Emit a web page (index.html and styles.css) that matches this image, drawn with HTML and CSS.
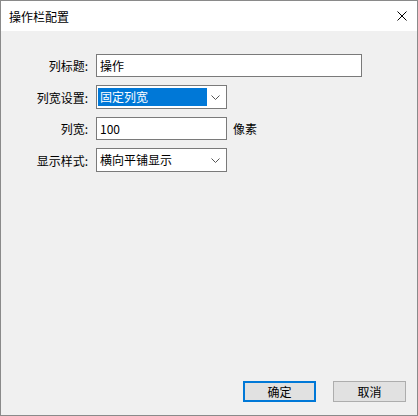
FILE: index.html
```html
<!DOCTYPE html>
<html lang="zh-CN">
<head>
    <meta charset="UTF-8">
    <title>操作栏配置</title>
    <link rel="stylesheet" href="styles.css">
</head>
<body>
    <div class="window">
        <div class="titlebar">
            <span class="title">操作栏配置</span>
            <svg class="close" width="10" height="10" viewBox="0 0 10 10">
                <path d="M0.5 0.5 L9.5 9.5 M9.5 0.5 L0.5 9.5" stroke="#000" stroke-width="1" fill="none"/>
            </svg>
        </div>

        <div class="form">
            <label class="label">列标题:</label>
            <div class="field"><input class="textbox wide" type="text" value="操作"></div>

            <label class="label">列宽设置:</label>
            <div class="field">
                <div class="combo focused">
                    <span class="combo-text selected">固定列宽</span>
                    <svg class="arrow" width="9" height="5" viewBox="0 0 9 5"><path d="M0.5 0.5 L4.5 4.5 L8.5 0.5" stroke="#555" fill="none"/></svg>
                </div>
            </div>

            <label class="label">列宽:</label>
            <div class="field">
                <input class="textbox narrow" type="text" value="100">
                <span class="unit">像素</span>
            </div>

            <label class="label">显示样式:</label>
            <div class="field">
                <div class="combo">
                    <span class="combo-text">横向平铺显示</span>
                    <svg class="arrow" width="9" height="5" viewBox="0 0 9 5"><path d="M0.5 0.5 L4.5 4.5 L8.5 0.5" stroke="#555" fill="none"/></svg>
                </div>
            </div>
        </div>

        <div class="footer">
            <button class="btn default">确定</button>
            <button class="btn">取消</button>
        </div>
    </div>
</body>
</html>
```

FILE: styles.css
```css
body {
    margin: 0;
    font-family: "Noto Sans CJK SC", "Noto Sans", sans-serif;
    font-size: 12px;
    color: #000;
}
.window {
    width: 418px;
    height: 416px;
    box-sizing: border-box;
    border: 1px solid #8a8a8a;
    background: #f0f0f0;
    display: flex;
    flex-direction: column;
}
.titlebar {
    height: 30px;
    background: #fff;
    display: flex;
    align-items: center;
    justify-content: space-between;
    padding: 0 10px 0 8px;
}
.title {
    font-size: 12px;
}
.close {
    display: block;
}
.form {
    flex: 1;
    display: grid;
    grid-template-columns: 87px auto;
    column-gap: 8px;
    row-gap: 8px;
    align-content: start;
    align-items: center;
    padding-top: 23px;
}
.label {
    text-align: right;
    white-space: nowrap;
}
.field {
    display: flex;
    align-items: center;
}
.textbox {
    box-sizing: border-box;
    height: 23px;
    border: 1px solid #7a7a7a;
    background: #fff;
    padding: 0 3px;
    font-family: inherit;
    font-size: 12px;
    color: #000;
    outline: none;
    margin: 0;
}
.wide {
    width: 266px;
}
.narrow {
    width: 131px;
}
.unit {
    margin-left: 6px;
}
.combo {
    box-sizing: border-box;
    width: 131px;
    height: 24px;
    border: 1px solid #7a7a7a;
    background: #fff;
    display: flex;
    align-items: center;
    padding: 2px 0 2px 1px;
}
.combo-text {
    flex: 1;
    height: 18px;
    line-height: 18px;
    padding-left: 2px;
}
.combo-text.selected {
    flex: none;
    width: 107px;
    background: #0078d7;
    color: #fff;
}
.combo .arrow {
    margin-left: auto;
    margin-right: 6px;
    display: block;
}
.footer {
    display: flex;
    justify-content: flex-end;
    gap: 17px;
    padding: 0 11px 13px 0;
}
.btn {
    box-sizing: border-box;
    width: 73px;
    height: 21px;
    border: 1px solid #adadad;
    background: #e1e1e1;
    font-family: inherit;
    font-size: 12px;
    color: #000;
    padding: 0;
    margin: 0;
}
.btn.default {
    border: 2px solid #0078d7;
}
```
